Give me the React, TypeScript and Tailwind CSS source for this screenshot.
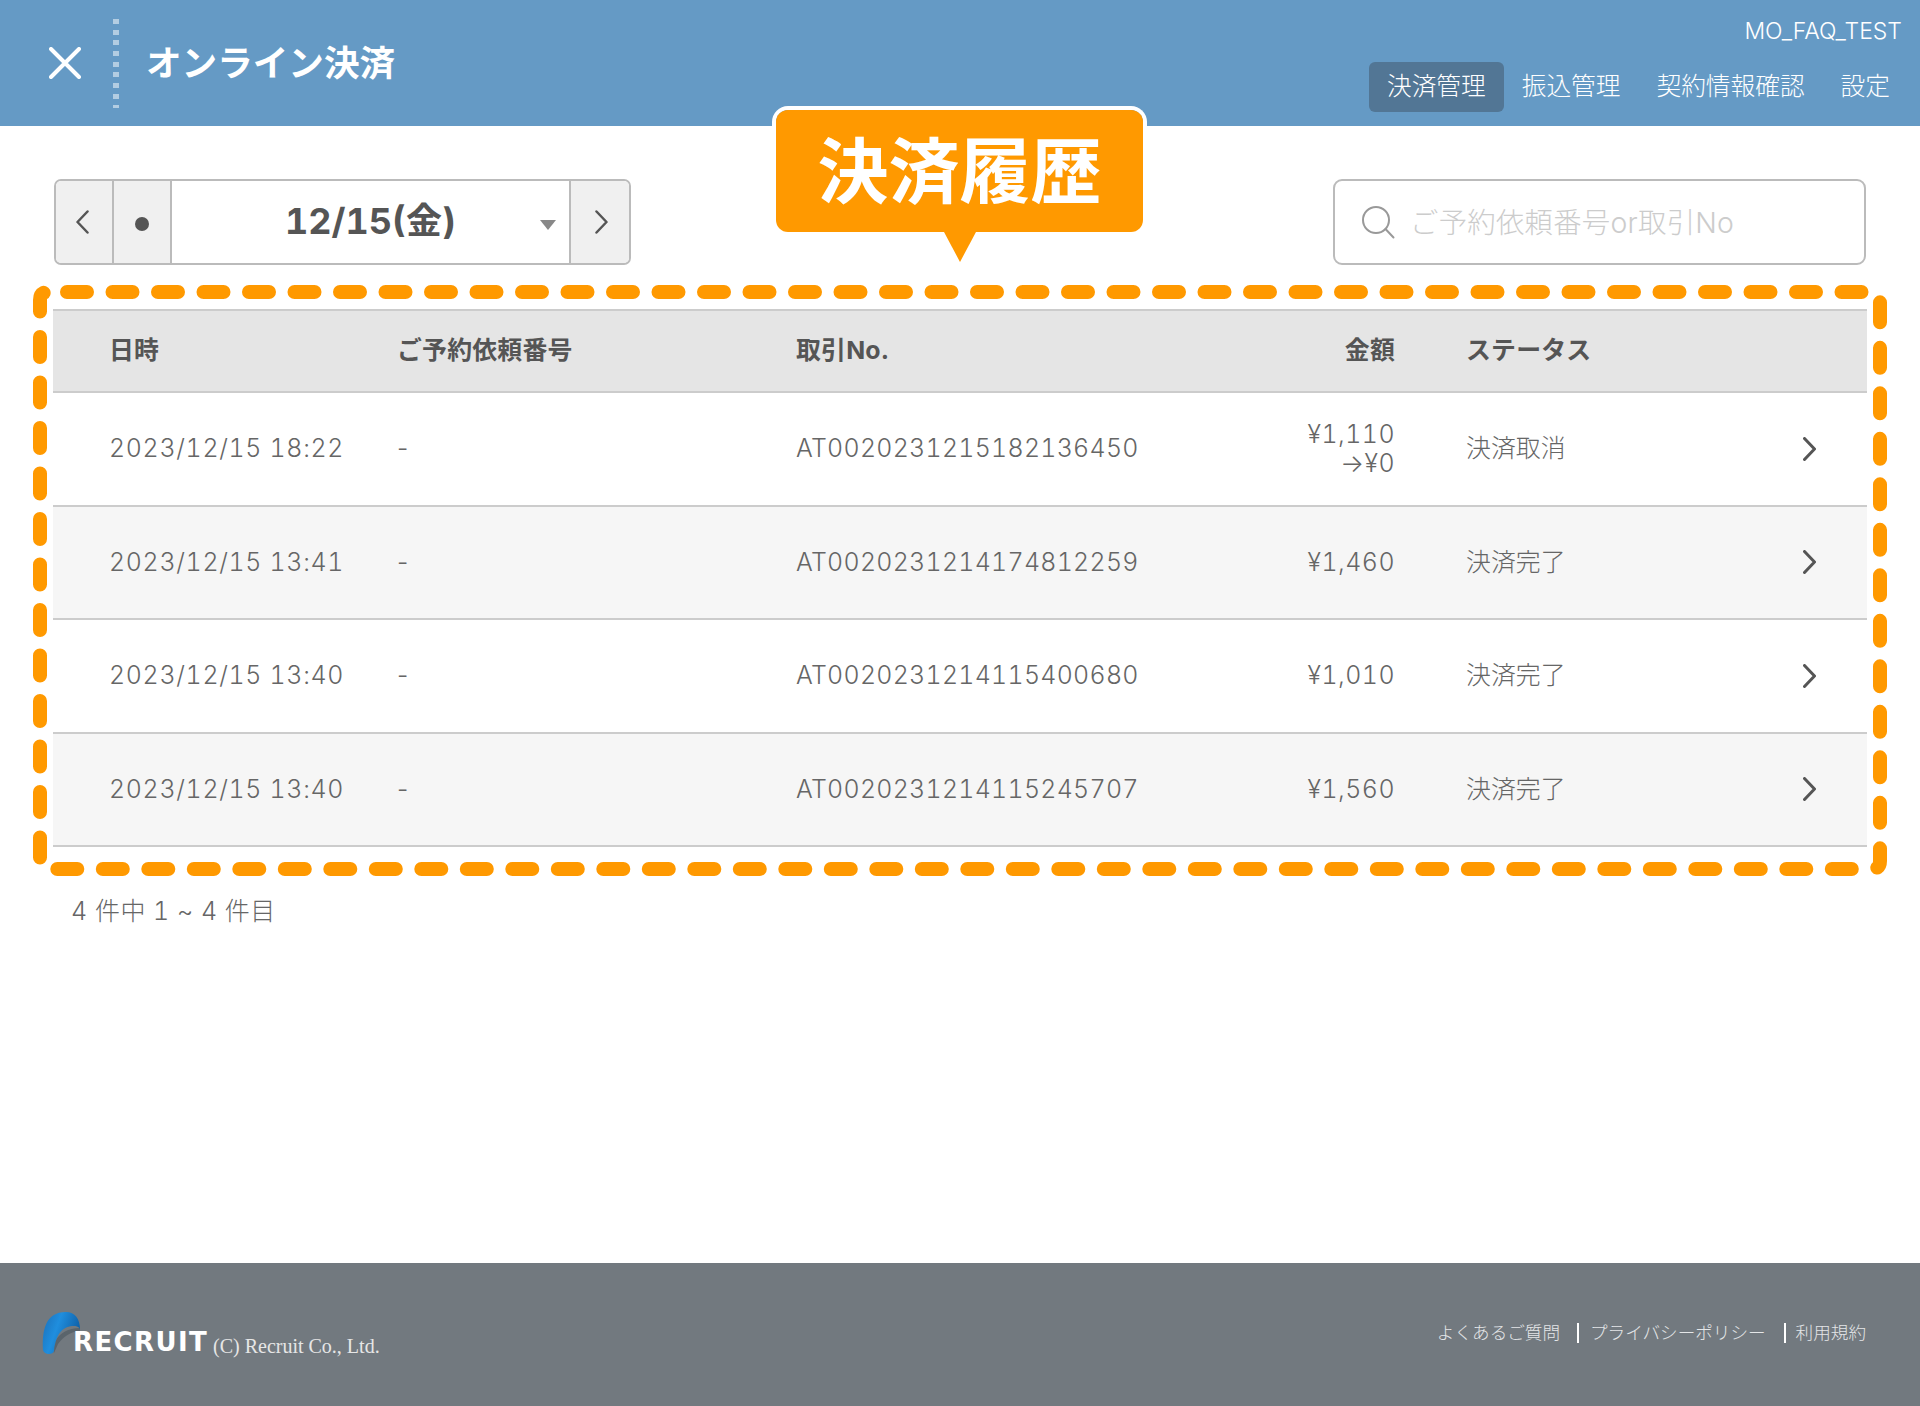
const ROWS = [
  { date: "2023/12/15 18:22", no: "AT0020231215182136450", amount: ["¥1,110", "→¥0"], status: "決済取消" },
  { date: "2023/12/15 13:41", no: "AT0020231214174812259", amount: ["¥1,460"], status: "決済完了" },
  { date: "2023/12/15 13:40", no: "AT0020231214115400680", amount: ["¥1,010"], status: "決済完了" },
  { date: "2023/12/15 13:40", no: "AT0020231214115245707", amount: ["¥1,560"], status: "決済完了" },
];

const NAV = ["決済管理", "振込管理", "契約情報確認", "設定"];

const COLS = "grid grid-cols-[288px_399px_400px_199px_394px_1fr] items-center pl-[56px]";

const Chevron = ({ dir = "right", w = 13, h = 24, sw = 3 }: { dir?: "left" | "right"; w?: number; h?: number; sw?: number }) => (
  <svg width={w} height={h} viewBox="0 0 13 24" fill="none" stroke="#555" strokeWidth={sw} strokeLinecap="round" strokeLinejoin="round">
    <path d={dir === "right" ? "M1.5 1.5 L11.5 12 L1.5 22.5" : "M11.5 1.5 L1.5 12 L11.5 22.5"} />
  </svg>
);

const DateNav = () => (
  <div className="flex w-[577px] h-[86px] rounded-[7px] border-2 border-[#bbbbbb] overflow-hidden">
    <div className="w-[58px] flex items-center justify-center pr-[3px] bg-[#f0f0f0] border-r-2 border-[#bbbbbb]">
      <Chevron dir="left" sw={2.5} />
    </div>
    <div className="w-[58px] flex items-center justify-center bg-[#f0f0f0] border-r-2 border-[#bbbbbb]">
      <div className="w-[14px] h-[14px] rounded-full bg-[#555555] mt-[3px]" />
    </div>
    <div className="flex-1 relative flex items-center justify-center text-[36px] font-bold tabular-nums text-[#555555]">
      <span className="mb-[3px]">12/15(金)</span>
      <div className="absolute right-[13px] top-[39px] w-0 h-0 border-l-[8px] border-r-[8px] border-t-[10px] border-l-transparent border-r-transparent border-t-[#888888]" />
    </div>
    <div className="w-[60px] flex items-center justify-center pl-[2px] bg-[#f0f0f0] border-l-2 border-[#bbbbbb]">
      <Chevron sw={2.5} />
    </div>
  </div>
);

const SearchBox = () => (
  <div className="flex items-center w-[533px] h-[86px] rounded-[9px] border-2 border-[#bbbbbb] pl-[26px]">
    <svg width="34" height="34" viewBox="0 0 34 34" fill="none" stroke="#999999" strokeWidth="2">
      <circle cx="15" cy="15" r="13" />
      <path d="M24.5 24 L32.5 32.5" strokeLinecap="round" />
    </svg>
    <span className="ml-[15px] mt-[2px] text-[28.4px] tracking-[0.25px] font-light text-[#cccccc]">ご予約依頼番号or取引No</span>
  </div>
);

const RecruitLogo = () => (
  <div className="flex items-end">
    <div className="relative w-[165px] h-[44px]">
      <svg className="absolute left-0 top-0" width="40" height="44" viewBox="0 0 40 44">
        <defs>
          <linearGradient id="arc" x1="0" y1="0" x2="1" y2="0.4">
            <stop offset="0" stopColor="#1b6fb8" />
            <stop offset="0.45" stopColor="#1f8ede" />
            <stop offset="1" stopColor="#0f5fa6" />
          </linearGradient>
        </defs>
        <path d="M14 29 C18 22 26 17 38 17 L38 20 C28 21 22 25 16 33 L12 42 L10 34Z" fill="#5a646b" />
        <path d="M1 39 C0 20 3 1 24 1 C33 1 38 8 38 18 C36 15 34 15 32 15 C22 15 14 21 12 40 C11 44 2 44 1 39Z" fill="url(#arc)" />
      </svg>
      <span className="absolute left-[31px] bottom-0 text-[26px] leading-[25px] font-bold text-white tracking-[1.4px] [font-family:'DejaVu_Sans',sans-serif]">RECRUIT</span>
    </div>
    <span className="ml-[6px] mb-[-2px] text-[20px] leading-[22px] text-[#e6e6e6] [font-family:'Liberation_Serif',serif]">(C) Recruit Co., Ltd.</span>
  </div>
);

export default function App() {
  return (
    <div className="relative flex flex-col min-h-[1406px] bg-white text-[#666666] [font-family:Inter,'Noto_Sans_CJK_JP',sans-serif]">
      <header className="flex justify-between h-[126px] bg-[#659ac5] text-white">
        <div className="flex items-center">
          <svg className="ml-[49px]" width="32" height="32" viewBox="0 0 32 32" stroke="#fff" strokeWidth="4" strokeLinecap="round">
            <path d="M2 2 L30 30 M30 2 L2 30" />
          </svg>
          <div className="ml-[32px] w-[6px] h-[89px] mt-[1px] bg-[repeating-linear-gradient(to_bottom,#b3cde2_0,#b3cde2_5px,transparent_5px,transparent_10.7px)]" />
          <h1 className="ml-[27px] text-[35.6px] font-bold mt-[1px]">オンライン決済</h1>
        </div>
        <div className="flex flex-col items-end pr-[12px]">
          <div className="mt-[16px] mr-[6px] text-[23px] leading-[30px] font-light">MO_FAQ_TEST</div>
          <nav className="flex mt-[16px]">
            {NAV.map((n, i) => (
              <div key={n} className={`h-[50px] flex items-center px-[18px] rounded-[6px] text-[24.7px] font-light ${i === 0 ? "bg-[#527695]" : ""}`}>
                {n}
              </div>
            ))}
          </nav>
        </div>
      </header>

      <div className="flex justify-between px-[54px] mt-[53px]">
        <DateNav />
        <SearchBox />
      </div>

      {/* callout over the header */}
      <div className="absolute left-[772px] top-[106px] w-[375px] h-[130px] rounded-[16px] border-4 border-b-0 border-white">
        <div className="relative h-[122px] bg-[#ff9900] rounded-[12px] flex items-center justify-center text-[71px] leading-none font-semibold text-white">
          <span>決済履歴</span>
          <div className="absolute left-[168px] top-[122px] w-0 h-0 border-l-[16px] border-r-[16px] border-t-[30px] border-l-transparent border-r-transparent border-t-[#ff9900]" />
        </div>
      </div>

      <div className="mx-[53px] mt-[44px] text-[24.9px] font-light">
        <div className={`${COLS} h-[82px] bg-[#e5e5e5] border-t-2 border-[#cccccc] font-bold tracking-[0.2px] text-[#555555]`}>
          <div>日時</div>
          <div>ご予約依頼番号</div>
          <div>取引No.</div>
          <div className="text-right">金額</div>
          <div className="pl-[71px]">ステータス</div>
          <div />
        </div>
        {ROWS.map((r, i) => (
          <div key={r.no} className={`${COLS} h-[113.5px] border-t-2 border-[#cccccc] ${i % 2 ? "bg-[#f6f6f6]" : "bg-white"}`}>
            <div className="tabular-nums tracking-[0.7px]">{r.date}</div>
            <div>-</div>
            <div className="tabular-nums tracking-[0.3px]">{r.no}</div>
            <div className="tabular-nums tracking-[0.5px] text-right leading-[29px]">
              {r.amount.map((a) => (
                <div key={a}>{a}</div>
              ))}
            </div>
            <div className="pl-[71px]">{r.status}</div>
            <div className="pl-[14px]"><Chevron /></div>
          </div>
        ))}
        <div className="border-t-2 border-[#cccccc]" />
      </div>

      {/* dashed highlight round the table */}
      <svg className="absolute left-0 top-0 pointer-events-none" width="1920" height="900" fill="none">
        <path
          d="M67 292 H1872 Q1880 292 1880 300 V861 Q1880 869 1872 869 H48 Q40 869 40 861 V300 Q40 292 48 292 H67"
          stroke="#ff9900"
          strokeWidth="14"
          strokeLinecap="round"
          strokeDasharray="20 25.5"
        />
      </svg>

      <div className="ml-[71px] mt-[46px] text-[25px] leading-[36px] font-light tabular-nums tracking-[0.5px]">4 件中 1 ~ 4 件目</div>

      <footer className="mt-auto h-[143px] bg-[#72797f] flex items-start justify-between pl-[42px] pr-[54px]">
        <div className="mt-[48px]"><RecruitLogo /></div>
        <div className="mt-[60px] flex items-center text-[17.6px] leading-[20px] font-light text-[#e4e6e8]">
          <span>よくあるご質問</span>
          <span className="ml-[17px] mr-[11px] w-[2px] h-[20px] bg-white" />
          <span>プライバシーポリシー</span>
          <span className="ml-[18px] mr-[10px] w-[2px] h-[20px] bg-white" />
          <span>利用規約</span>
        </div>
      </footer>
    </div>
  );
}
